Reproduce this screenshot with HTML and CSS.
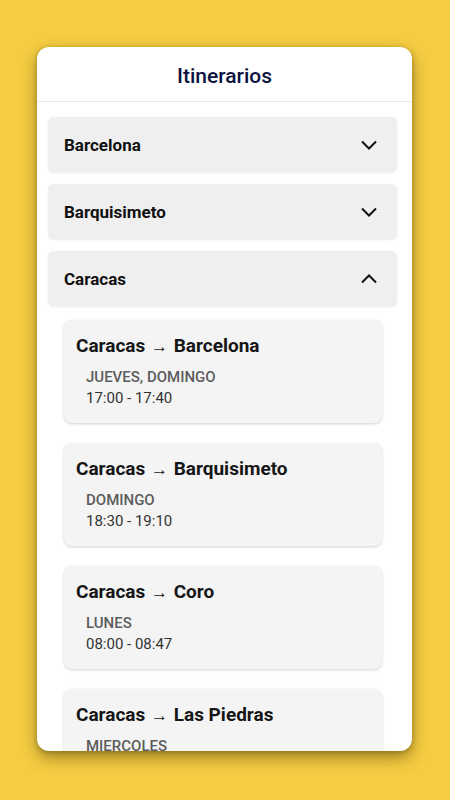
FILE: index.html
```html
<!DOCTYPE html>
<html lang="es">
<head>
<meta charset="utf-8">
<title>Itinerarios</title>
<link rel="stylesheet" href="styles.css">
</head>
<body>
<main class="card">
  <header class="header"><h1 class="title">Itinerarios</h1></header>
  <section class="list">
    <div class="acc">
      <div class="acc-head"><span class="acc-name">Barcelona</span>
        <svg class="chev" viewBox="0 0 24 24" width="24" height="24"><polyline points="5,8.5 12,15.5 19,8.5"/></svg>
      </div>
    </div>
    <div class="acc">
      <div class="acc-head"><span class="acc-name">Barquisimeto</span>
        <svg class="chev" viewBox="0 0 24 24" width="24" height="24"><polyline points="5,8.5 12,15.5 19,8.5"/></svg>
      </div>
    </div>
    <div class="acc open">
      <div class="acc-head"><span class="acc-name">Caracas</span>
        <svg class="chev" viewBox="0 0 24 24" width="24" height="24"><polyline points="5,15.5 12,8.5 19,15.5"/></svg>
      </div>
    </div>
    <div class="acc-body">
      <article class="route">
        <h2 class="route-title">Caracas <span class="arrow">→</span> Barcelona</h2>
        <p class="days">JUEVES, DOMINGO</p>
        <p class="time">17:00 - 17:40</p>
      </article>
      <article class="route">
        <h2 class="route-title">Caracas <span class="arrow">→</span> Barquisimeto</h2>
        <p class="days">DOMINGO</p>
        <p class="time">18:30 - 19:10</p>
      </article>
      <article class="route">
        <h2 class="route-title">Caracas <span class="arrow">→</span> Coro</h2>
        <p class="days">LUNES</p>
        <p class="time">08:00 - 08:47</p>
      </article>
      <article class="route">
        <h2 class="route-title">Caracas <span class="arrow">→</span> Las Piedras</h2>
        <p class="days">MIERCOLES</p>
        <p class="time">06:00 - 06:40</p>
      </article>
    </div>
  </section>
</main>
</body>
</html>
```
FILE: styles.css
```css
* { box-sizing: border-box; }
html, body { margin: 0; height: 100%; }
body {
  background: #f5cd42;
  font-family: Roboto, "Noto Sans", Arial, sans-serif;
  padding: 47px 38px 49px 37px;
}
.card {
  width: 375px;
  height: 704px;
  background: #fff;
  border-radius: 12px;
  overflow: hidden;
  display: flex;
  flex-direction: column;
  box-shadow: 0 7px 16px rgba(60, 45, 0, 0.45), 0 1px 5px rgba(60, 45, 0, 0.3);
}
.header {
  height: 55px;
  flex: none;
  padding-top: 3px;
  border-bottom: 1px solid #e8e8e8;
  display: flex;
  align-items: center;
  justify-content: center;
}
.title {
  margin: 0;
  font-size: 21px;
  font-weight: 500;
  color: #0c1240;
}
.list {
  flex: 1;
  overflow: hidden;
  padding: 15px 15px 0 11px;
}
.acc {
  background: #efefef;
  border-radius: 6px;
  margin-bottom: 12px;
  box-shadow: 0 1px 2px rgba(0, 0, 0, 0.08);
}
.acc.open { margin-bottom: 0; }
.acc-head {
  height: 55px;
  padding: 0 16px 0 16px;
  display: flex;
  align-items: center;
  justify-content: space-between;
}
.acc-name {
  font-size: 17px;
  font-weight: 700;
  color: #111;
}
.chev {
  fill: none;
  stroke: #111;
  stroke-width: 2;
}
.acc-body {
  padding: 14px 15px 0 16px;
  display: flex;
  flex-direction: column;
  gap: 20px;
}
.route {
  background: #f4f4f4;
  border-radius: 8px;
  padding: 14px 12px 15px 12px;
  box-shadow: 0 1px 3px rgba(0, 0, 0, 0.18);
}
.route-title {
  margin: 0;
  font-size: 19px;
  line-height: 24px;
  font-weight: 700;
  color: #161616;
}
.arrow { font-weight: 400; font-size: 17px; padding: 0 1px; }
.days, .time {
  margin: 0;
  padding-left: 10px;
  font-size: 15px;
  line-height: 19px;
}
.days {
  margin-top: 10px;
  color: #5c5c5c;
  font-weight: 500;
}
.time {
  margin-top: 2px;
  color: #333;
  font-weight: 400;
}
```
